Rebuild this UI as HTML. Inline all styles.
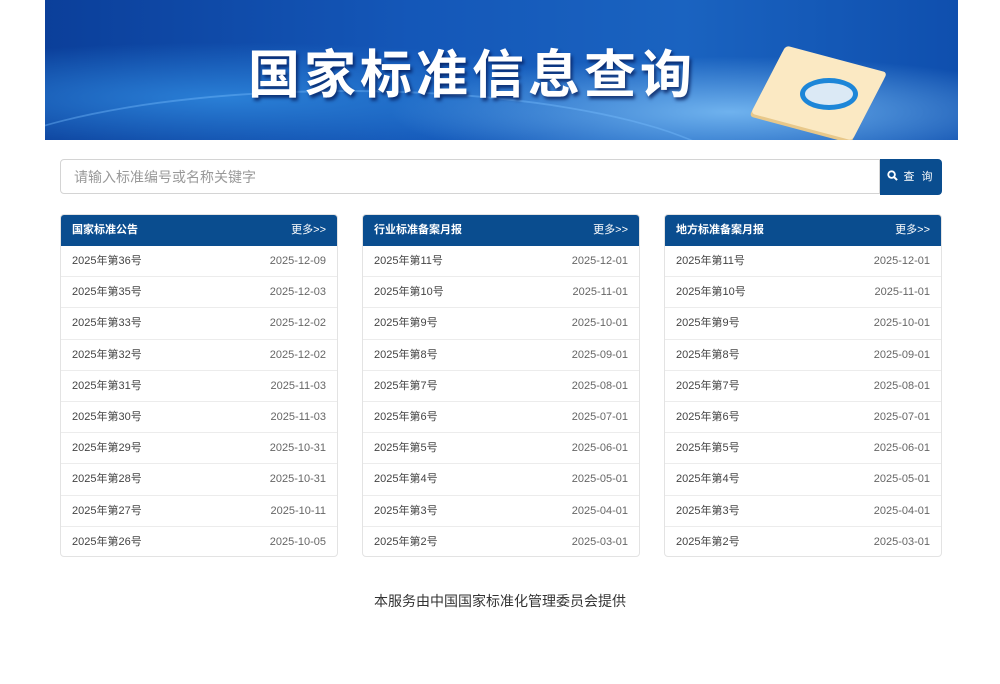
<!DOCTYPE html>
<html><head><meta charset="utf-8"><style>
body{margin:0;width:1000px;height:684px;background:#fff;font-family:"Liberation Sans","Noto Sans CJK SC",sans-serif;position:relative;overflow:hidden}
.banner{position:absolute;left:45px;top:0;width:913px;height:140px;background:radial-gradient(ellipse at 75% 80%,#6fb2ee 0%,rgba(60,140,220,0) 35%),radial-gradient(ellipse at 20% 70%,#2a7fd6 0%,rgba(0,0,0,0) 40%),linear-gradient(90deg,#0b3f9a,#1457b8 40%,#1a63c0 70%,#0f4fae);overflow:hidden}
.banner .t{position:absolute;left:203px;top:44px;font-size:52px;font-weight:bold;color:#fff;letter-spacing:4px;text-shadow:2px 3px 3px rgba(0,20,80,.7);line-height:64px}
.banner .paper{position:absolute;left:718px;top:58px;width:112px;height:70px;background:#fbe9c3;transform:skewX(-15deg) rotate(14deg);border-radius:4px;box-shadow:0 3px 0 #e8c88a}
.banner .lens{position:absolute;left:755px;top:78px;width:48px;height:22px;border:5px solid #1d86d8;border-radius:50%;background:#dbe9f5}
.banner .arc{position:absolute;left:-100px;top:90px;width:800px;height:200px;border:2px solid rgba(120,190,255,.4);border-radius:50%}
.search{position:absolute;left:60px;top:159px;height:35px;border:1px solid #d4d4d4;border-radius:4px 0 0 4px;font-size:14px;color:#999;line-height:34px;padding-left:13px;box-sizing:border-box;width:820px}
.btn{position:absolute;left:880px;top:159px;width:62px;height:36px;background:#0a4d8f;border-radius:0 4px 4px 0;color:#fff;font-size:11px;letter-spacing:2px;line-height:36px;text-align:center}
.col{position:absolute;top:214px;width:278px;height:343px;border:1px solid #e3e3e3;border-radius:4px;box-sizing:border-box;overflow:hidden}
.h{height:31px;background:#0a4d8f;color:#fff;font-size:11px;line-height:31px;padding:0 11px;display:flex;justify-content:space-between}
.h b{font-weight:bold}
.r{height:31.2px;border-bottom:1px solid #ececec;box-sizing:border-box;display:flex;justify-content:space-between;padding:0 11px;font-size:11px;line-height:31px;color:#444}
.r span:last-child{color:#666}
.r:last-child{border-bottom:none}
.foot{position:absolute;top:591px;width:1000px;text-align:center;font-size:14px;color:#333}
</style></head><body>
<div class="banner"><div class="arc"></div><div class="t">国家标准信息查询</div><div class="paper"></div><div class="lens"></div></div>
<div class="search">请输入标准编号或名称关键字</div>
<div class="btn"><svg width="11" height="11" viewBox="0 0 12 12" style="vertical-align:-1px"><circle cx="5" cy="5" r="3.6" fill="none" stroke="#fff" stroke-width="2"/><path d="M7.5 7.5L11 11" stroke="#fff" stroke-width="2.2"/></svg> 查 询</div>
<div class="col" style="left:60px"><div class="h"><b>国家标准公告</b><span>更多&gt;&gt;</span></div>
<div class="r"><span>2025年第36号</span><span>2025-12-09</span></div>
<div class="r"><span>2025年第35号</span><span>2025-12-03</span></div>
<div class="r"><span>2025年第33号</span><span>2025-12-02</span></div>
<div class="r"><span>2025年第32号</span><span>2025-12-02</span></div>
<div class="r"><span>2025年第31号</span><span>2025-11-03</span></div>
<div class="r"><span>2025年第30号</span><span>2025-11-03</span></div>
<div class="r"><span>2025年第29号</span><span>2025-10-31</span></div>
<div class="r"><span>2025年第28号</span><span>2025-10-31</span></div>
<div class="r"><span>2025年第27号</span><span>2025-10-11</span></div>
<div class="r"><span>2025年第26号</span><span>2025-10-05</span></div></div>
<div class="col" style="left:362px"><div class="h"><b>行业标准备案月报</b><span>更多&gt;&gt;</span></div>
<div class="r"><span>2025年第11号</span><span>2025-12-01</span></div>
<div class="r"><span>2025年第10号</span><span>2025-11-01</span></div>
<div class="r"><span>2025年第9号</span><span>2025-10-01</span></div>
<div class="r"><span>2025年第8号</span><span>2025-09-01</span></div>
<div class="r"><span>2025年第7号</span><span>2025-08-01</span></div>
<div class="r"><span>2025年第6号</span><span>2025-07-01</span></div>
<div class="r"><span>2025年第5号</span><span>2025-06-01</span></div>
<div class="r"><span>2025年第4号</span><span>2025-05-01</span></div>
<div class="r"><span>2025年第3号</span><span>2025-04-01</span></div>
<div class="r"><span>2025年第2号</span><span>2025-03-01</span></div></div>
<div class="col" style="left:664px"><div class="h"><b>地方标准备案月报</b><span>更多&gt;&gt;</span></div>
<div class="r"><span>2025年第11号</span><span>2025-12-01</span></div>
<div class="r"><span>2025年第10号</span><span>2025-11-01</span></div>
<div class="r"><span>2025年第9号</span><span>2025-10-01</span></div>
<div class="r"><span>2025年第8号</span><span>2025-09-01</span></div>
<div class="r"><span>2025年第7号</span><span>2025-08-01</span></div>
<div class="r"><span>2025年第6号</span><span>2025-07-01</span></div>
<div class="r"><span>2025年第5号</span><span>2025-06-01</span></div>
<div class="r"><span>2025年第4号</span><span>2025-05-01</span></div>
<div class="r"><span>2025年第3号</span><span>2025-04-01</span></div>
<div class="r"><span>2025年第2号</span><span>2025-03-01</span></div></div>
<div class="foot">本服务由中国国家标准化管理委员会提供</div>
</body></html>
